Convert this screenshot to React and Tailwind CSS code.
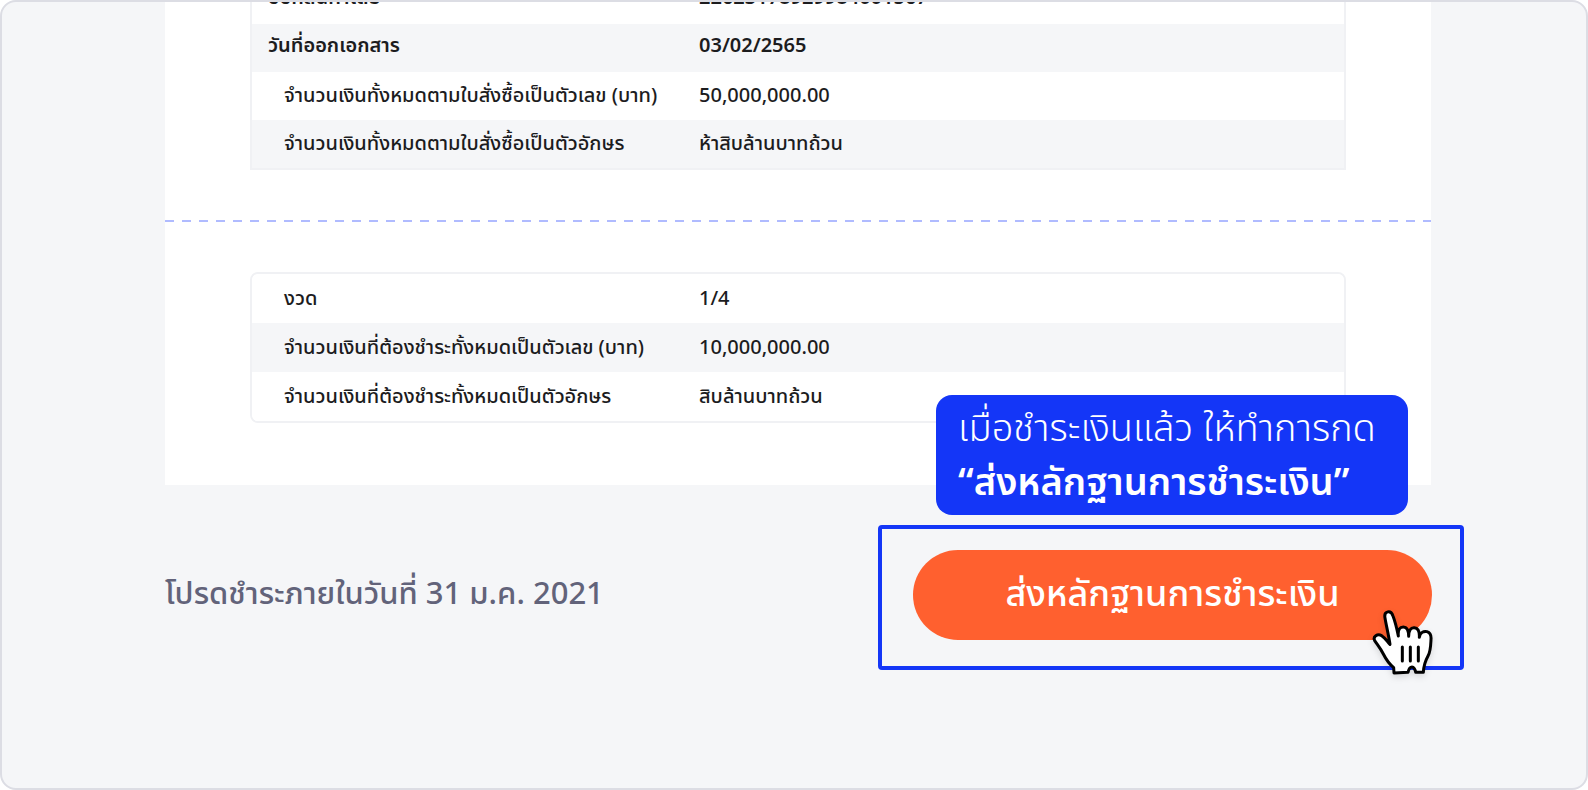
const orderRows = [
    { label: "ออกสินค้าโดย", value: "22623178929984001567", bold: true },
    { label: "วันที่ออกเอกสาร", value: "03/02/2565", bold: true },
    { label: "จำนวนเงินทั้งหมดตามใบสั่งซื้อเป็นตัวเลข (บาท)", value: "50,000,000.00" },
    { label: "จำนวนเงินทั้งหมดตามใบสั่งซื้อเป็นตัวอักษร", value: "ห้าสิบล้านบาทถ้วน" },
];

const installmentRows = [
    { label: "งวด", value: "1/4" },
    { label: "จำนวนเงินที่ต้องชำระทั้งหมดเป็นตัวเลข (บาท)", value: "10,000,000.00" },
    { label: "จำนวนเงินที่ต้องชำระทั้งหมดเป็นตัวอักษร", value: "สิบล้านบาทถ้วน" },
];

function DetailTable({ rows, className, rowClassName }) {
    return (
        <div className={`overflow-hidden border-2 border-[#f0f1f4] ${className}`}>
            <table className="w-full table-fixed border-collapse text-left text-xl text-[#1c1c1e]">
                <tbody>
                    {rows.map((row) => (
                        <tr key={row.label} className={`odd:bg-white even:bg-[#f5f6f8] ${rowClassName}`}>
                            <th
                                scope="row"
                                className={`w-[447px] whitespace-nowrap ${row.bold ? "pb-1 pl-4 font-semibold" : "pl-8 font-medium"}`}
                            >
                                {row.label}
                            </th>
                            <td className={row.bold ? "pb-1 font-semibold" : "font-medium"}>
                                {row.value}
                            </td>
                        </tr>
                    ))}
                </tbody>
            </table>
        </div>
    );
}

function HandCursor() {
    return (
        <svg
            viewBox="0 0 210 222"
            className="pointer-events-none absolute -bottom-3 right-[22px] h-[74px] w-[70px] drop-shadow-md"
            fill="none"
            stroke="#000"
            strokeWidth="9"
            strokeLinecap="round"
            strokeLinejoin="round"
            aria-hidden="true"
        >
            <path
                d="M51 42 C47 20 69 17 75 36 C82 54 87 76 91 96 C89 76 96 69 106 69 C117 69 122 80 122 97 C122 80 128 70 139 71 C151 72 155 84 154 100 C156 86 167 80 177 83 C187 86 190 94 189 106 C188 128 188 142 180 156 C170 174 167 186 166 205 L143 205 C142 197 137 189 132 189 C127 189 122 197 120 205 L78 207 L77 191 C64 180 54 166 46 150 C38 134 28 122 20 110 C14 98 28 88 41 95 C52 102 58 113 66 121 C62 94 55 66 51 42 Z"
                fill="#fff"
            />
            <path d="M103 129 V171 M127 129 V171 M151 129 V171" />
        </svg>
    );
}

function App() {
    return (
        <main className="flex min-h-screen flex-col overflow-hidden rounded-2xl border-2 border-[#dcdde4] bg-[#f5f6f8] pl-[163px] pr-[155px] font-['Noto_Sans_Thai','Noto_Sans',sans-serif]">
            <section className="bg-white pb-[62px]">
                <div className="px-[85px]">
                    <DetailTable rows={orderRows} className="-mt-7" rowClassName="h-12" />
                </div>
                <hr className="my-[50px] h-0.5 border-0 bg-[repeating-linear-gradient(90deg,#b0bbff_0,#b0bbff_9px,transparent_9px,transparent_17px)]" />
                <div className="px-[85px]">
                    <DetailTable rows={installmentRows} className="rounded-lg" rowClassName="h-[49px]" />
                </div>
            </section>

            <footer className="mt-10 flex items-center justify-between">
                <p className="pb-1 text-[31px] font-medium text-[#62637a]">
                    โปรดชำระภายในวันที่ 31 ม.ค. 2021
                </p>

                <div className="relative -mr-[33px] rounded border-4 border-[#1436f7] pb-[26px] pl-[31px] pr-7 pt-[21px]">
                    <div className="absolute bottom-full left-[54px] mb-3.5 w-[472px] rounded-2xl bg-[#1436f7] pb-1 pl-[22px] pr-5 pt-2 text-[38px] leading-[54px] text-white">
                        <p className="font-light">เมื่อชำระเงินแล้ว ให้ทำการกด</p>
                        <p className="font-semibold">“ส่งหลักฐานการชำระเงิน”</p>
                    </div>
                    <button
                        type="button"
                        className="block h-[90px] w-[519px] rounded-full bg-[#ff602f] text-4xl font-medium text-white"
                    >
                        ส่งหลักฐานการชำระเงิน
                    </button>
                    <HandCursor />
                </div>
            </footer>
        </main>
    );
}

export default App;
